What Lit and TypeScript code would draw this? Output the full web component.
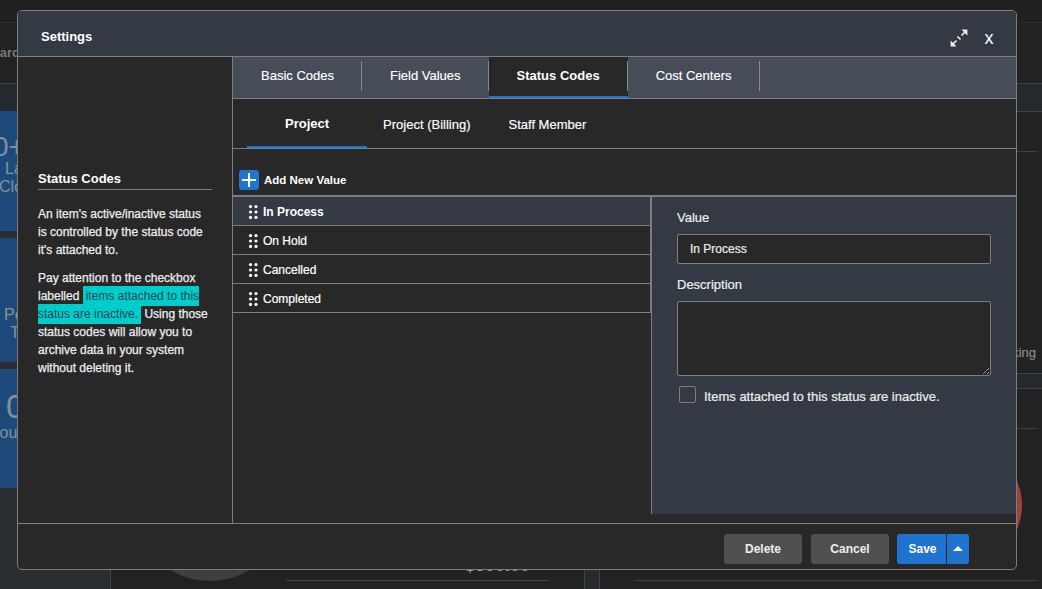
import { LitElement, html, svg, css } from "lit";
import { customElement, state } from "lit/decorators.js";

const TOP_TABS = ["Basic Codes", "Field Values", "Status Codes", "Cost Centers"];
const SUB_TABS = ["Project", "Project (Billing)", "Staff Member"];
const VALUES = ["In Process", "On Hold", "Cancelled", "Completed"];

@customElement("app-root")
export class AppRoot extends LitElement {
  @state() topTab = "Status Codes";
  @state() subTab = "Project";
  @state() selected = "In Process";

  static styles = css`
    :host { display: block; width: 1042px; height: 589px; font-family: "Liberation Sans", Arial, sans-serif; color: #fff; }
    * { box-sizing: border-box; }
    .page { position: relative; width: 1042px; height: 589px; overflow: hidden; background: #222; }

    /* dimmed page behind the dialog */
    .bg { display: flex; flex-direction: column; height: 589px; color: #84909c; }
    .bar { height: 23px; flex: none; border-bottom: 1px solid #2e2e2e; background: #202020; }
    .crumb { height: 60px; flex: none; display: flex; align-items: center; font-size: 13px; font-weight: 700; color: #777; padding-bottom: 2px; }
    .crumb span { margin-left: -48px; white-space: nowrap; }
    .band { height: 29px; flex: none; border-top: 1px solid #444; border-bottom: 1px solid #444; background: #24292e; }
    .main { flex: 1; display: flex; min-height: 0; }
    .cards { width: 110px; flex: none; margin-top: -1px; background: #2a2d31; display: flex; flex-direction: column; gap: 7px; overflow: hidden; }
    .card { background: #1e4a7b; overflow: hidden; white-space: nowrap; display: flex; flex-direction: column; }
    .c1 { height: 120px; padding-top: 22px; }
    .c2 { height: 124px; padding-top: 68px; }
    .c3 { height: 119px; padding-top: 21px; }
    .big { font-size: 28px; line-height: 27px; }
    .mid { font-size: 16px; line-height: 18px; }
    .c1 .big { margin-left: -7px; }
    .c1 .l1 { margin-left: 5px; }
    .c1 .l2 { margin-left: -1px; }
    .c2 .l1 { margin-left: 4px; }
    .c2 .l2 { margin-left: 10px; }
    .c3 .big { margin-left: 6px; font-size: 33px; line-height: 34px; }
    .c3 .l1 { margin-left: -12px; }
    .panel1 { width: 474px; flex: none; border-left: 1px solid #444; display: flex; align-items: flex-end; padding: 0 0 8px 23px; }
    .pie { width: 152px; height: 152px; border-radius: 50%; background: #3f3f3f; flex: none; }
    .pie.red { width: 120px; height: 120px; background: #9c4437; }
    .amount { width: 262px; border-bottom: 1px solid #444; font-size: 18px; font-weight: 700; line-height: 20px; padding: 0 0 5px 179px; color: #999; }
    .gutter { width: 16px; flex: none; border-left: 1px solid #444; border-right: 1px solid #444; background: #262b30; }
    .panel2 { flex: 1; display: flex; flex-direction: column; padding-top: 39px; }
    .rule { height: 1px; background: #404040; margin: 0 5px 0 35px; flex: none; }
    .ting { margin-top: 193px; font-size: 13px; line-height: 16px; text-align: right; padding-right: 6px; color: #8a8a8a; -webkit-text-stroke: 0.2px #8a8a8a; }
    .band2 { height: 16px; margin-top: 12px; flex: none; border-top: 1px solid #444; border-bottom: 1px solid #444; background: #24292e; }
    .rule2 { margin-top: 39px; }
    .pieRow { height: 151px; display: flex; justify-content: flex-end; align-items: center; padding-right: 20px; flex: none; }

    /* dialog */
    .modal { position: absolute; left: 17px; top: 10px; width: 1000px; height: 560px; border: 1px solid #7d7d7d; border-radius: 5px; background: #282828; display: flex; flex-direction: column; overflow: hidden; }
    .head { height: 46px; flex: none; background: #333a43; border-bottom: 1px solid #7d7d7d; display: flex; align-items: center; padding: 6px 21px 0 23px; }
    .title { font-size: 13px; font-weight: 700; flex: 1; }
    .expand { width: 18px; height: 18px; display: block; margin-right: 15px; margin-top: 2px; }
    .close { font-size: 18px; line-height: 18px; margin-top: 2px; width: 12px; text-align: center; }
    .body { flex: 1; display: flex; min-height: 0; }
    .side { width: 215px; flex: none; border-right: 1px solid #7d7d7d; padding: 113px 20px 0 20px; }
    .side h3 { margin: 0 0 15px; font-size: 13px; line-height: 18px; font-weight: 700; border-bottom: 1px solid #7d7d7d; padding: 0; height: 20px; width: 174px; }
    .side p { margin: 0 0 10px; font-size: 12px; line-height: 18px; color: #eee; -webkit-text-stroke: 0.25px #eee; }
    .hl { background: #00cccc; color: #22484e; padding: 3px; -webkit-text-stroke: 0; }
    .right { flex: 1; min-width: 0; display: flex; flex-direction: column; }
    .tabs { height: 42px; flex: none; background: #464c58; border-bottom: 1px solid #7d7d7d; display: flex; align-items: stretch; }
    .tab { padding: 0 27px 4px 28px; font-size: 13px; display: flex; align-items: center; white-space: nowrap; cursor: pointer; -webkit-text-stroke: 0.15px #fff; }
    .tab.on { background: #282828; font-weight: 700; border-bottom: 2px solid #1f74d0; padding: 0 28px 2px; margin-right: -1px; -webkit-text-stroke: 0; }
    .sep { width: 1px; height: 30px; margin-top: 4px; background: #858a92; flex: none; }
    .subs { height: 50px; flex: none; border-bottom: 1px solid #7d7d7d; display: flex; padding-left: 14px; }
    .sub { font-size: 13px; padding: 2px 16px 0; display: flex; align-items: center; white-space: nowrap; cursor: pointer; -webkit-text-stroke: 0.15px #fff; }
    .sub.on { font-weight: 700; padding: 2px 38px 0; border-bottom: 2px solid #1f74d0; -webkit-text-stroke: 0; }
    .sub.last { padding-left: 22px; }
    .tools { height: 48px; flex: none; border-bottom: 2px solid #7d7d7d; display: flex; align-items: center; gap: 5px; padding: 16px 0 0 6px; font-size: 11.5px; font-weight: 700; }
    .plus { width: 20px; height: 20px; display: block; }
    .split { flex: 1; display: flex; min-height: 0; align-items: flex-start; }
    .list { width: 418px; flex: none; border-right: 1px solid #7d7d7d; }
    .row { height: 29px; border-bottom: 1px solid #7d7d7d; display: flex; align-items: center; gap: 3px; padding: 2px 0 0 15px; font-size: 12px; cursor: pointer; -webkit-text-stroke: 0.2px #fff; }
    .row.on { background: #333a43; font-weight: 700; -webkit-text-stroke: 0; }
    .grip { width: 12px; height: 14px; display: block; flex: none; margin-top: -1px; }
    .detail { flex: 1; height: 317px; border-left: 1px solid #7d7d7d; background: #333a43; padding: 13px 25px 0 25px; display: flex; flex-direction: column; }
    label.cap { font-size: 13px; line-height: 16px; color: #eee; margin-bottom: 8px; display: block; -webkit-text-stroke: 0.2px #eee; }
    .field { width: 314px; height: 30px; background: #282828; border: 1px solid #7d7d7d; border-radius: 2px; color: #eee; font: 12px "Liberation Sans", Arial, sans-serif; padding: 0 12px; outline: none; display: block; margin-bottom: 13px; -webkit-text-stroke: 0.2px #eee; }
    textarea.field { height: 75px; margin-bottom: 10px; padding: 4px 12px; }
    .check { display: flex; align-items: flex-start; gap: 8px; font-size: 13px; color: #eee; padding-left: 2px; -webkit-text-stroke: 0.2px #eee; }
    .check span { padding-top: 3px; line-height: 15px; }
    .check input { appearance: none; -webkit-appearance: none; width: 17px; height: 17px; margin: 0; border: 1px solid #7d7d7d; border-radius: 2px; background: #333a43; flex: none; }
    .foot { height: 46px; flex: none; border-top: 1px solid #7d7d7d; display: flex; align-items: center; gap: 9px; padding: 4px 47px 0 0; justify-content: flex-end; }
    button { font: 700 12px "Liberation Sans", Arial, sans-serif; color: #fff; border: 0; height: 30px; border-radius: 3px; padding: 0; cursor: pointer; }
    .gray { width: 78px; background: #505050; color: #eee; }
    .split-btn { display: flex; margin-left: -1px; }
    .save { width: 49px; background: #1f74d0; border-radius: 3px 0 0 3px; padding-left: 2px; }
    .caret { width: 22px; margin-left: 1px; background: #1f74d0; border-radius: 0 3px 3px 0; display: flex; align-items: center; justify-content: center; }
    .caret svg { display: block; }
  `;

  private grip() {
    return html`<svg class="grip" viewBox="0 0 12 14" aria-hidden="true">
      ${[2.5, 8].map((x) => [1.6, 7, 12.4].map((y) => svg`<circle cx=${x} cy=${y} r="1.6" fill="#fff"></circle>`))}
    </svg>`;
  }

  render() {
    return html`
      <div class="page">
        <div class="bg">
          <div class="bar"></div>
          <div class="crumb"><span>Dashboard</span></div>
          <div class="band"></div>
          <div class="main">
            <div class="cards">
              <div class="card c1"><span class="big">0+</span><span class="mid l1">Last 30 Days</span><span class="mid l2">Closed Projects</span></div>
              <div class="card c2"><span class="mid l1">Personal</span><span class="mid l2">Tasks</span></div>
              <div class="card c3"><span class="big">0</span><span class="mid l1">Hours</span></div>
            </div>
            <div class="panel1">
              <div class="pie"></div>
              <div class="amount">$500.00</div>
            </div>
            <div class="gutter"></div>
            <div class="panel2">
              <div class="rule"></div>
              <div class="ting">Tracking</div>
              <div class="band2"></div>
              <div class="rule rule2"></div>
              <div class="pieRow"><div class="pie red"></div></div>
              <div class="rule"></div>
            </div>
          </div>
        </div>

        <div class="modal">
          <div class="head">
            <div class="title">Settings</div>
            <svg class="expand" viewBox="0 0 18 18" aria-hidden="true" fill="none" stroke="#eee">
              <path d="M2 16 L6.5 11.5 M11.5 6.5 L16 2 M7.5 7.5 L10.5 10.5" stroke-width="1.6"></path>
              <path d="M11.5 0.6 H17.4 V6.5 Z M0.6 11.5 V17.4 H6.5 Z" fill="#eee" stroke="none"></path>
            </svg>
            <div class="close">x</div>
          </div>
          <div class="body">
            <div class="side">
              <h3>Status Codes</h3>
              <p>An item's active/inactive status is controlled by the status code it's attached to.</p>
              <p>Pay attention to the checkbox labelled <span class="hl">items attached to this status are inactive.</span> Using those status codes will allow you to archive data in your system without deleting it.</p>
            </div>
            <div class="right">
              <div class="tabs">
                ${TOP_TABS.map((t) => html`<div class="tab ${t === this.topTab ? "on" : ""}" @click=${() => (this.topTab = t)}>${t}</div><i class="sep"></i>`)}
              </div>
              <div class="subs">
                ${SUB_TABS.map((t, i) => html`<div class="sub ${t === this.subTab ? "on" : ""} ${i === 2 ? "last" : ""}" @click=${() => (this.subTab = t)}>${t}</div>`)}
              </div>
              <div class="tools">
                <svg class="plus" viewBox="0 0 20 20" aria-hidden="true">
                  <rect width="20" height="20" rx="3" fill="#1f74d0"></rect>
                  <path d="M10 3 V17 M3 10 H17" stroke="#fff" stroke-width="2" fill="none"></path>
                </svg>
                <span>Add New Value</span>
              </div>
              <div class="split">
                <div class="list">
                  ${VALUES.map((v) => html`<div class="row ${v === this.selected ? "on" : ""}" @click=${() => (this.selected = v)}>${this.grip()}<span>${v}</span></div>`)}
                </div>
                <div class="detail">
                  <label class="cap">Value</label>
                  <input class="field" .value=${this.selected} />
                  <label class="cap">Description</label>
                  <textarea class="field"></textarea>
                  <label class="check"><input type="checkbox" /><span>Items attached to this status are inactive.</span></label>
                </div>
              </div>
            </div>
          </div>
          <div class="foot">
            <button class="gray">Delete</button>
            <button class="gray">Cancel</button>
            <div class="split-btn">
              <button class="save">Save</button>
              <button class="caret" aria-label="More">
                <svg width="10" height="5" viewBox="0 0 10 5" aria-hidden="true"><path d="M0 5 L5 0 L10 5 Z" fill="#fff"></path></svg>
              </button>
            </div>
          </div>
        </div>
      </div>
    `;
  }
}
